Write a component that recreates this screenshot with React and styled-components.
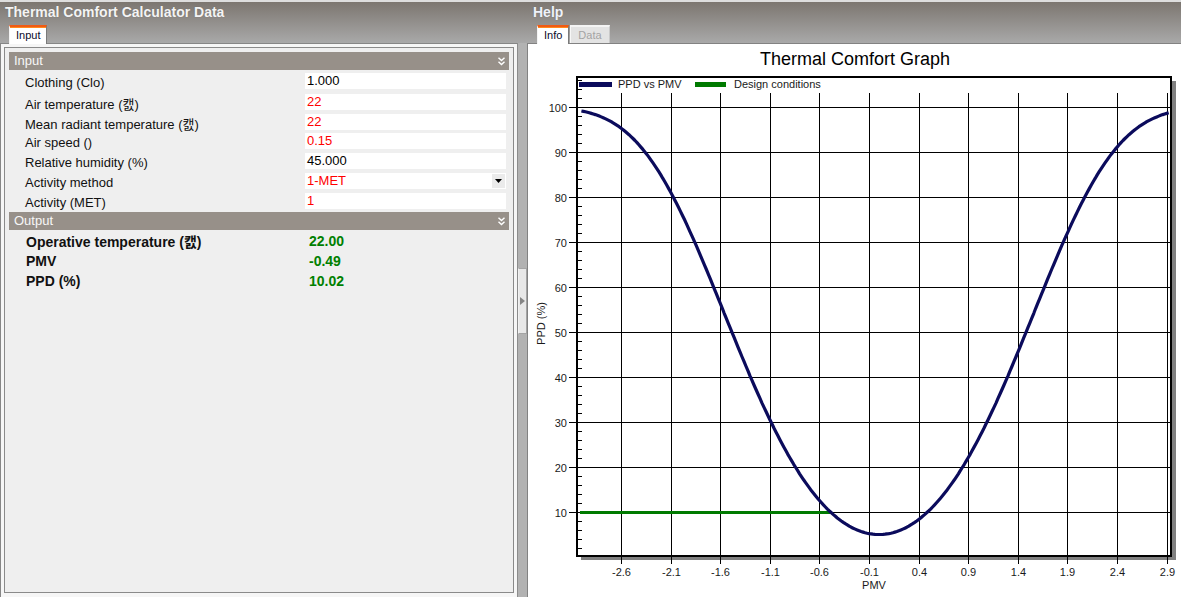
import React from 'react';
import styled, { createGlobalStyle } from 'styled-components';

const GlobalStyle = createGlobalStyle`
  html, body { margin: 0; padding: 0; }
  body {
    width: 1181px; height: 597px; overflow: hidden;
    font-family: "Liberation Sans", Arial, "Noto Sans CJK KR", sans-serif;
  }
  * { box-sizing: border-box; }
`;

const Window = styled.div`
  display: grid;
  grid-template-columns: 517px 10px 1fr;
  width: 1181px;
  height: 597px;
  background: linear-gradient(to bottom, #dedede 0, #dedede 2px, #7c7670 2px, #a9a9a9 43px, #a9a9a9 100%);
`;

const Pane = styled.section`
  display: flex;
  flex-direction: column;
  min-width: 0;
`;

const PaneHeader = styled.header`
  height: 43px;
  display: flex;
  flex-direction: column;
  justify-content: space-between;
  padding-left: ${p => p.$pad}px;
`;

const PaneTitle = styled.h1`
  margin: 0;
  padding: 4px 0 0 0;
  font: bold 14px/16px "Liberation Sans", Arial, sans-serif;
  color: ${p => p.$color || '#f4f4f4'};
  text-shadow: 0 0 1px rgba(60, 55, 50, 0.35);
`;

const TabStrip = styled.div`
  display: flex;
  align-items: flex-end;
  gap: 1px;
  padding-left: ${p => p.$inset}px;
`;

const Tab = styled.div`
  position: relative;
  z-index: 1;
  height: ${p => (p.$active ? 19 : 18)}px;
  margin-bottom: ${p => (p.$active ? -1 : 0)}px;
  padding: 0 ${p => (p.$active ? 6 : 7)}px;
  font: 11px/16px "Liberation Sans", Arial, sans-serif;
  color: ${p => (p.$active ? '#0a0a2a' : '#a3a3a3')};
  background: ${p => (p.$active ? '#ffffff' : '#e3e3e3')};
  border-top: 2px solid ${p => (p.$active ? '#f05a14' : '#f4f4f4')};
  border-left: 1px solid ${p => (p.$active ? '#f4f4f4' : '#f7f7f7')};
  border-right: 1px solid ${p => (p.$active ? '#7a7a7a' : '#c9c9c9')};
  box-shadow: ${p => (p.$active ? 'inset 0 1px 0 #ff8a1e' : 'none')};
`;

const LeftBody = styled.div`
  flex: 1;
  display: flex;
  border-top: 1px solid #868686;
  border-left: 1px solid #868686;
  background: #f6f6f6;
  padding: 3px 3px 4px 3px;
`;

const PropertyBox = styled.div`
  flex: 1;
  border: 1px solid #8a8a8a;
  background: #efefef;
  padding: 4px;
`;

const GroupBar = styled.div`
  height: 18px;
  margin-top: ${p => p.$gap || 0}px;
  display: flex;
  align-items: center;
  justify-content: space-between;
  padding: 0 4px 0 5px;
  background: #979089;
  color: #f7f7f7;
  font: 13px/18px "Liberation Sans", Arial, sans-serif;
`;

const GroupRows = styled.div`
  padding-top: ${p => p.$top || 0}px;
`;

const Row = styled.div`
  display: grid;
  grid-template-columns: 296px 201px;
  height: 20px;
  align-items: center;
`;

const Label = styled.div`
  padding: ${p => (p.$bold ? '1px' : '3px')} 0 0 ${p => (p.$bold ? 17 : 16)}px;
  font: ${p => (p.$bold ? 'bold 14px' : '13px')} "Liberation Sans", Arial, "Noto Sans CJK KR", sans-serif;
  color: #111;
  white-space: nowrap;
`;

const ValueBox = styled.div`
  height: 16px;
  display: flex;
  align-items: center;
  justify-content: space-between;
  padding-left: 2px;
  background: #ffffff;
  color: ${p => p.$color};
  font: 13px/16px "Liberation Sans", Arial, sans-serif;
`;

const OutputValue = styled.div`
  padding: 1px 0 0 4px;
  font: bold 14px "Liberation Sans", Arial, sans-serif;
  color: #008000;
`;

const DropButton = styled.div`
  width: 13px;
  height: 14px;
  margin-right: 1px;
  background: #ebebeb;
  display: flex;
  align-items: center;
  justify-content: center;
`;

const Splitter = styled.div`
  display: flex;
  flex-direction: column;
`;

const SplitterSpacer = styled.div`
  height: 43px;
`;

const SplitterBar = styled.div`
  flex: 1;
  background: #b2b2b2;
  border-left: 1px solid #8c8c8c;
  display: flex;
  flex-direction: column;
`;

const SplitterHandle = styled.div`
  margin-top: 225px;
  height: 66px;
  background: #e8e8e8;
  border: 1px solid #a4a4a4;
  border-left-color: #f2f2f2;
  display: flex;
  align-items: center;
  justify-content: center;
`;

const ChartBody = styled.div`
  flex: 1;
  border-top: 1px solid #828282;
  border-left: 1px solid #828282;
  background: #ffffff;
  overflow: hidden;
`;

const ChartSvg = styled.svg`
  display: block;
  font-family: "Liberation Sans", Arial, sans-serif;
`;

const Chevron = () => (
  <svg width="7" height="9" viewBox="0 0 7 9">
    <path d="M0.5 0.8 L3.5 3.6 L6.5 0.8 M0.5 4.8 L3.5 7.6 L6.5 4.8" fill="none" stroke="#ffffff" strokeWidth="1.4" />
  </svg>
);

const inputs = [
  { label: 'Clothing (Clo)', value: '1.000', color: '#000' },
  { label: 'Air temperature (캜)', value: '22', color: '#f00' },
  { label: 'Mean radiant temperature (캜)', value: '22', color: '#f00' },
  { label: 'Air speed ()', value: '0.15', color: '#f00' },
  { label: 'Relative humidity (%)', value: '45.000', color: '#000' },
  { label: 'Activity method', value: '1-MET', color: '#f00', drop: true },
  { label: 'Activity (MET)', value: '1', color: '#f00' },
];

const outputs = [
  { label: 'Operative temperature (캜)', value: '22.00' },
  { label: 'PMV', value: '-0.49' },
  { label: 'PPD (%)', value: '10.02' },
];

const X = p => 879 + 99.2 * p;
const Y = v => 557 - 4.5 * v;
const ppd = p => 100 - 95 * Math.exp(-0.03353 * p ** 4 - 0.2179 * p ** 2);

const curve = [];
for (let i = 0; i <= 296; i++) {
  const p = -3 + i * 0.02;
  curve.push(`${X(p).toFixed(1)},${Y(ppd(p)).toFixed(1)}`);
}

const xTicks = [];
for (let k = 0; k < 12; k++) xTicks.push(Math.round((-2.6 + 0.5 * k) * 10) / 10);
const yMajor = [10, 20, 30, 40, 50, 60, 70, 80, 90, 100];
const yMinor = [];
for (let v = 2; v <= 106; v += 2) if (v % 10 !== 0) yMinor.push(v);

const Chart = () => (
  <ChartSvg width="653" height="553" viewBox="528 44 653 553">
    <text x="855" y="65" fontSize="18" textAnchor="middle" fill="#000">Thermal Comfort Graph</text>
    <rect x="581" y="81" width="595" height="479" fill="#808080" />
    <rect x="577" y="77" width="594" height="479" fill="#ffffff" />
    {yMajor.map(v => (
      <g key={`h${v}`}>
        <line x1="569" x2="1171" y1={Y(v) + 0.5} y2={Y(v) + 0.5} stroke="#000" strokeWidth="1" />
        <text x="567" y={Y(v) + 4.5} fontSize="11" textAnchor="end" fill="#1a1a1a">{v}</text>
      </g>
    ))}
    {yMinor.map(v => (
      <line key={`m${v}`} x1="577" x2="582" y1={Y(v) + 0.5} y2={Y(v) + 0.5} stroke="#000" strokeWidth="1" />
    ))}
    {xTicks.map(p => {
      const x = Math.round(X(p)) + 0.5;
      return (
        <g key={`v${p}`}>
          <line x1={x} x2={x} y1="93" y2="564" stroke="#000" strokeWidth="1" />
          <text x={x} y="576" fontSize="11" textAnchor="middle" fill="#1a1a1a">{p.toFixed(1)}</text>
        </g>
      );
    })}
    <line x1="580" x2={X(-0.49)} y1="512.5" y2="512.5" stroke="#007a00" strokeWidth="3" />
    <polyline points={curve.join(' ')} fill="none" stroke="#0b0b5c" strokeWidth="3.2" strokeLinejoin="round" />
    <rect x="579" y="82" width="33" height="5" fill="#0b0b5c" />
    <text x="618" y="88" fontSize="11" fill="#1a1a1a">PPD vs PMV</text>
    <rect x="695" y="82" width="31" height="5" fill="#007a00" />
    <text x="734" y="88" fontSize="11" fill="#1a1a1a">Design conditions</text>
    <rect x="577" y="77" width="594" height="479" fill="none" stroke="#000" strokeWidth="2" />
    <text x="874" y="589" fontSize="11" textAnchor="middle" fill="#1a1a1a">PMV</text>
    <text transform="translate(545 323.5) rotate(-90)" fontSize="11" textAnchor="middle" fill="#1a1a1a">PPD (%)</text>
  </ChartSvg>
);

export default function App() {
  return (
    <>
      <GlobalStyle />
      <Window>
        <Pane>
          <PaneHeader $pad={5}>
            <PaneTitle>Thermal Comfort Calculator Data</PaneTitle>
            <TabStrip $inset={4}>
              <Tab $active>Input</Tab>
            </TabStrip>
          </PaneHeader>
          <LeftBody>
            <PropertyBox>
              <GroupBar>
                <span>Input</span>
                <Chevron />
              </GroupBar>
              <GroupRows $top={1}>
                {inputs.map(r => (
                  <Row key={r.label}>
                    <Label>{r.label}</Label>
                    <ValueBox $color={r.color}>
                      <span>{r.value}</span>
                      {r.drop && (
                        <DropButton>
                          <svg width="7" height="4" viewBox="0 0 7 4">
                            <path d="M0 0 H7 L3.5 4 Z" fill="#000" />
                          </svg>
                        </DropButton>
                      )}
                    </ValueBox>
                  </Row>
                ))}
              </GroupRows>
              <GroupBar $gap={1}>
                <span>Output</span>
                <Chevron />
              </GroupBar>
              <GroupRows>
                {outputs.map(r => (
                  <Row key={r.label}>
                    <Label $bold>{r.label}</Label>
                    <OutputValue>{r.value}</OutputValue>
                  </Row>
                ))}
              </GroupRows>
            </PropertyBox>
          </LeftBody>
        </Pane>
        <Splitter>
          <SplitterSpacer />
          <SplitterBar>
            <SplitterHandle>
              <svg width="5" height="8" viewBox="0 0 5 8">
                <path d="M0 0 L5 4 L0 8 Z" fill="#858585" />
              </svg>
            </SplitterHandle>
          </SplitterBar>
        </Splitter>
        <Pane>
          <PaneHeader $pad={6}>
            <PaneTitle $color="#eef2fa">Help</PaneTitle>
            <TabStrip $inset={4}>
              <Tab $active>Info</Tab>
              <Tab>Data</Tab>
            </TabStrip>
          </PaneHeader>
          <ChartBody>
            <Chart />
          </ChartBody>
        </Pane>
      </Window>
    </>
  );
}
